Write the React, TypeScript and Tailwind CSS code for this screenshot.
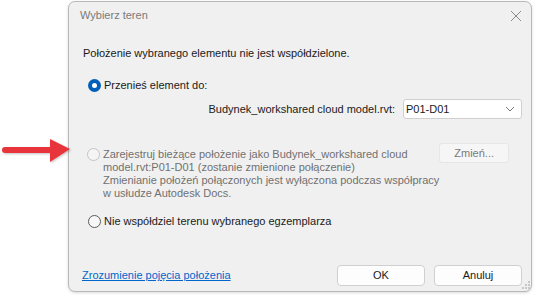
import React from "react";

function Radio({ state }: { state: "on" | "off" | "disabled" }) {
  if (state === "on") {
    return (
      <span className="flex h-[13px] w-[13px] items-center justify-center rounded-full bg-[#005fb8]">
        <span className="h-[5px] w-[5px] rounded-full bg-white" />
      </span>
    );
  }
  if (state === "disabled") {
    return <span className="block h-[13px] w-[13px] rounded-full border border-[#c4c4c4] bg-[#f5f5f5]" />;
  }
  return <span className="block h-[13px] w-[13px] rounded-full border border-[#5a5a5a] bg-[#f7f7f7]" />;
}

export default function App() {
  return (
    <div className="relative h-[295px] w-[535px] overflow-hidden bg-white font-['Liberation_Sans',Arial,sans-serif] text-[11px] text-[#1a1a1a]">
      <div className="ml-[68px] mt-[1px] flex h-[291px] w-[464px] flex-col rounded-[7px] border border-[#b9b9b9] bg-[#f0f0f0] shadow-[0_1px_3px_rgba(0,0,0,0.15)]">
        {/* title bar */}
        <div className="flex h-[27px] items-center justify-between pl-[11px] pr-[8px]">
          <span className="text-[#7a7a7a]">Wybierz teren</span>
          <svg width="12" height="12" viewBox="0 0 12 12" className="mr-[1px]">
            <path d="M1 1 L11 11 M11 1 L1 11" stroke="#8a8a8a" strokeWidth="1" />
          </svg>
        </div>
        <div className="flex flex-1 flex-col pl-[14px] pr-[9px]">
          <div className="mt-[16px] leading-[16px]">Położenie wybranego elementu nie jest współdzielone.</div>

          <div className="mt-[16px] flex items-center gap-[3px] pl-[5px] leading-[16px]">
            <Radio state="on" />
            <span>Przenieś element do:</span>
          </div>

          <div className="mt-[6px] flex items-center justify-end">
            <span className="mr-[8px]">Budynek_workshared cloud model.rvt:</span>
            <div className="flex h-[20px] w-[119px] items-center justify-between rounded-[3px] border border-[#cfcfcf] bg-white pl-[2px] pr-[6px]">
              <span>P01-D01</span>
              <svg width="10" height="6" viewBox="0 0 10 6">
                <path d="M1 1 L5 5 L9 1" fill="none" stroke="#7a7a7a" strokeWidth="1" />
              </svg>
            </div>
          </div>

          <div className="mt-[29px] flex items-start justify-between">
            <div className="flex items-start gap-[3px] pl-[4px] leading-[13px] text-[#707070]">
              <span className="mt-[0px]">
                <Radio state="disabled" />
              </span>
              <div className="whitespace-nowrap">
                Zarejestruj bieżące położenie jako Budynek_workshared cloud
                <br />
                model.rvt:P01-D01 (zostanie zmienione połączenie)
                <br />
                Zmienianie położeń połączonych jest wyłączona podczas współpracy
                <br />
                w usłudze Autodesk Docs.
              </div>
            </div>
            <div className="mr-[13px] mt-[-5px] flex h-[20px] w-[84px] items-center justify-center rounded-[3px] border border-[#e6e6e6] bg-[#f6f6f6] text-[#7a7a7a]">
              Zmień...
            </div>
          </div>

          <div className="mt-[13px] flex items-center gap-[3px] pl-[5px] leading-[16px]">
            <Radio state="off" />
            <span>Nie współdziel terenu wybranego egzemplarza</span>
          </div>

          <div className="mt-[36px] flex items-center justify-between">
            <span className="-ml-[1px] text-[#0066cc] underline">Zrozumienie pojęcia położenia</span>
            <div className="flex gap-[9px]">
              <div className="flex h-[21px] w-[88px] items-center justify-center rounded-[4px] border border-[#d0d0d0] bg-[#fdfdfd]">OK</div>
              <div className="flex h-[21px] w-[88px] items-center justify-center rounded-[4px] border border-[#d0d0d0] bg-[#fdfdfd]">Anuluj</div>
            </div>
          </div>
        </div>
      </div>

      {/* red arrow */}
      <svg className="absolute left-0 top-[137px]" width="74" height="28" viewBox="0 0 74 28">
        <defs>
          <filter id="sh" x="-10%" y="-20%" width="130%" height="150%">
            <feDropShadow dx="1" dy="1" stdDeviation="1" floodColor="#000" floodOpacity="0.25" />
          </filter>
        </defs>
        <g filter="url(#sh)">
          <line x1="5" y1="13" x2="54" y2="13" stroke="#e8353b" strokeWidth="6" strokeLinecap="round" />
          <path d="M50 2 L70 12 L50 25 Z" fill="#e8353b" />
        </g>
      </svg>

      {/* resize grip */}
      <svg className="absolute left-[522px] top-[281px]" width="9" height="9" viewBox="0 0 9 9">
        <rect x="6" y="0" width="2" height="2" fill="#c8c8c8" />
        <rect x="3" y="3" width="2" height="2" fill="#c8c8c8" />
        <rect x="6" y="3" width="2" height="2" fill="#c8c8c8" />
        <rect x="0" y="6" width="2" height="2" fill="#c8c8c8" />
        <rect x="3" y="6" width="2" height="2" fill="#c8c8c8" />
        <rect x="6" y="6" width="2" height="2" fill="#c8c8c8" />
      </svg>
    </div>
  );
}
